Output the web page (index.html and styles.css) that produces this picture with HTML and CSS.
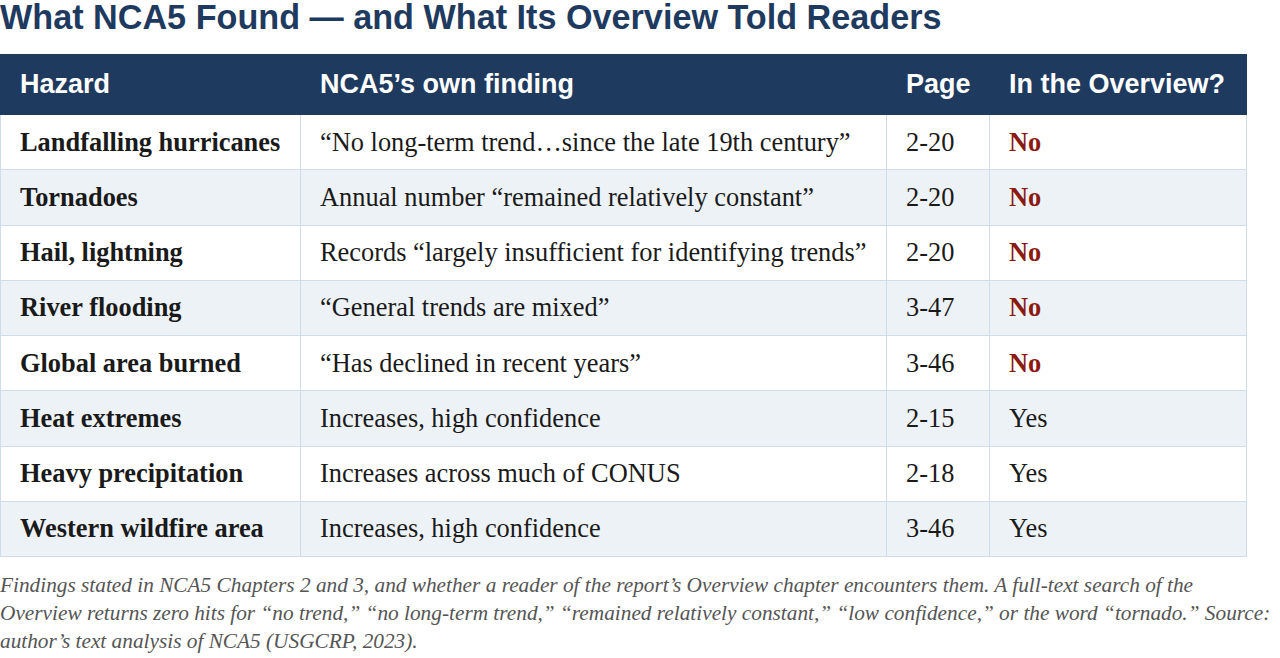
FILE: index.html
```html
<!DOCTYPE html>
<html lang="en">
<head>
<meta charset="utf-8">
<title>What NCA5 Found</title>
<link rel="stylesheet" href="styles.css">
</head>
<body>
<h1 class="title">What NCA5 Found — and What Its Overview Told Readers</h1>
<table class="findings">
  <colgroup>
    <col class="c-hazard">
    <col class="c-finding">
    <col class="c-page">
    <col class="c-over">
  </colgroup>
  <thead>
    <tr><th>Hazard</th><th>NCA5’s own finding</th><th>Page</th><th>In the Overview?</th></tr>
  </thead>
  <tbody>
    <tr><td class="hz">Landfalling hurricanes</td><td>“No long-term trend…since the late 19th century”</td><td>2-20</td><td class="no">No</td></tr>
    <tr><td class="hz">Tornadoes</td><td>Annual number “remained relatively constant”</td><td>2-20</td><td class="no">No</td></tr>
    <tr><td class="hz">Hail, lightning</td><td>Records “largely insufficient for identifying trends”</td><td>2-20</td><td class="no">No</td></tr>
    <tr><td class="hz">River flooding</td><td>“General trends are mixed”</td><td>3-47</td><td class="no">No</td></tr>
    <tr><td class="hz">Global area burned</td><td>“Has declined in recent years”</td><td>3-46</td><td class="no">No</td></tr>
    <tr><td class="hz">Heat extremes</td><td>Increases, high confidence</td><td>2-15</td><td>Yes</td></tr>
    <tr><td class="hz">Heavy precipitation</td><td>Increases across much of CONUS</td><td>2-18</td><td>Yes</td></tr>
    <tr><td class="hz">Western wildfire area</td><td>Increases, high confidence</td><td>3-46</td><td>Yes</td></tr>
  </tbody>
</table>
<p class="caption">Findings stated in NCA5 Chapters 2 and 3, and whether a reader of the report’s Overview chapter encounters them. A full-text search of the Overview returns zero hits for “no trend,” “no long-term trend,” “remained relatively constant,” “low confidence,” or the word “tornado.” Source: author’s text analysis of NCA5 (USGCRP, 2023).</p>
</body>
</html>
```
FILE: styles.css
```css
html, body {
  margin: 0;
  padding: 0;
  background: #ffffff;
}
body {
  font-family: "Liberation Serif", "Times New Roman", serif;
  color: #1a1a1a;
}
.title {
  font-family: "Liberation Sans", Arial, sans-serif;
  font-weight: 700;
  font-size: 34.2px;
  line-height: 34px;
  color: #1f3a5f;
  margin: 0 0 20px 0;
}
.findings {
  border-collapse: collapse;
  width: 1246px;
  table-layout: fixed;
}
.c-hazard { width: 300px; }
.c-finding { width: 586px; }
.c-page { width: 103px; }
.c-over { width: 257px; }
.findings th {
  background: #1f3a5f;
  color: #ffffff;
  font-family: "Liberation Sans", Arial, sans-serif;
  font-weight: 700;
  font-size: 27px;
  text-align: left;
  height: 60px;
  padding: 0 18px 0 19px;
  box-sizing: border-box;
  border: 1px solid #1f3a5f;
}
.findings td {
  font-size: 26.4px;
  height: 55.25px;
  padding: 0 18px 0 19px;
  box-sizing: border-box;
  border: 1px solid #cfdcec;
  vertical-align: middle;
  white-space: nowrap;
}
.findings tbody tr:nth-child(even) td {
  background: #edf2f7;
}
.findings td.hz {
  font-weight: 700;
}
.findings td.no {
  font-weight: 700;
  color: #8b1a12;
}
.caption {
  font-style: italic;
  font-size: 21.3px;
  line-height: 28px;
  color: #555555;
  max-width: 1274px;
  margin: 14px 0 0 0;
}
```
